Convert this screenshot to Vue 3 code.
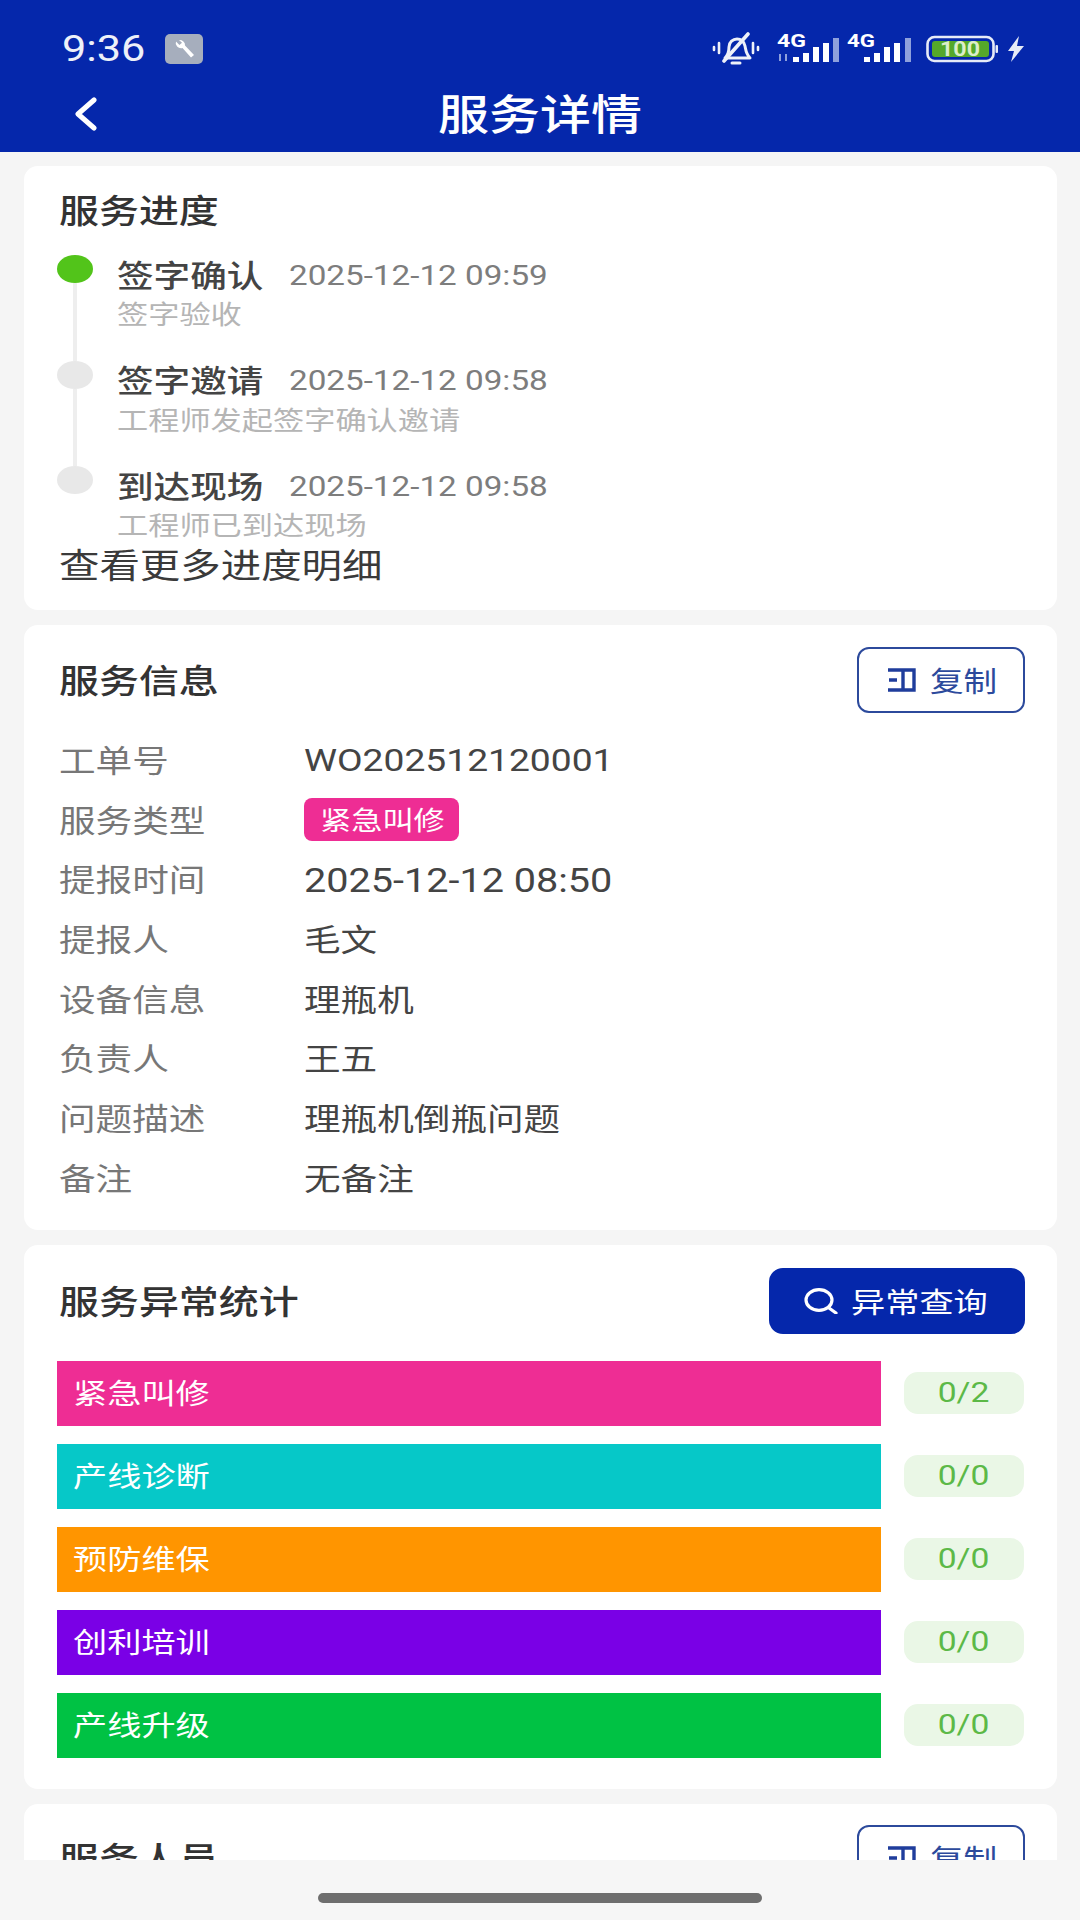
<script setup>
const steps = [
  { title: '签字确认', time: '2025-12-12 09:59', desc: '签字验收', active: true },
  { title: '签字邀请', time: '2025-12-12 09:58', desc: '工程师发起签字确认邀请' },
  { title: '到达现场', time: '2025-12-12 09:58', desc: '工程师已到达现场' }
]
const info = [
  { label: '工单号', text: 'WO202512120001', kind: 'code' },
  { label: '服务类型', text: '紧急叫修', kind: 'tag' },
  { label: '提报时间', text: '2025-12-12 08:50', kind: 'date' },
  { label: '提报人', text: '毛文', kind: 'text' },
  { label: '设备信息', text: '理瓶机', kind: 'text' },
  { label: '负责人', text: '王五', kind: 'text' },
  { label: '问题描述', text: '理瓶机倒瓶问题', kind: 'text' },
  { label: '备注', text: '无备注', kind: 'text' }
]
const stats = [
  { name: '紧急叫修', count: '0/2', color: '#ee2d94' },
  { name: '产线诊断', count: '0/0', color: '#06c8c8' },
  { name: '预防维保', count: '0/0', color: '#ff9500' },
  { name: '创利培训', count: '0/0', color: '#7a00e6' },
  { name: '产线升级', count: '0/0', color: '#00c244' }
]
</script>

<template>
  <div class="page">
    <header class="top">
      <div class="status">
        <div class="status-left">
          <span class="clock"><span class="wide">9:36</span></span>
          <svg class="wrench" width="38" height="30" viewBox="0 0 38 30">
            <rect width="38" height="30" rx="5" fill="#a6aebd" />
            <path d="M11 7.5a5.5 5 0 0 0 6.5 6.5L26 23.5l3-2.5-9-9.5A5.5 5 0 0 0 14 6l3 2.8-2.6 2.2z" fill="#fff" />
          </svg>
        </div>
        <div class="status-right">
          <svg class="bell" width="48" height="34" viewBox="0 0 48 34" fill="none" stroke="#eef1f9" stroke-width="3" stroke-linecap="round" stroke-linejoin="round">
            <path d="M2 15v3M7 11v10M46 15v3M41 11v10" stroke-width="2.6" />
            <path d="M13 26c3-3 4-6 4-11 0-5 4-8 8-8s7 3 8 7c1 5 1 8 5 12z" />
            <path d="M20 31h8" />
            <path d="M12 29 36 2" stroke-width="3.6" />
          </svg>
          <svg class="signal first" width="63" height="36" viewBox="0 -4 63 36">
            <text x="0" y="14" class="net" textLength="29" lengthAdjust="spacingAndGlyphs">4G</text>
            <path d="M3 21v7M9 21v7" stroke="#8ea0dc" stroke-width="2" />
            <rect x="16" y="24" width="6" height="5" fill="#fff" />
            <rect x="26" y="20" width="6" height="9" fill="#fff" />
            <rect x="36" y="14" width="6" height="15" fill="#fff" />
            <rect x="46" y="10" width="6" height="19" fill="#fff" />
            <rect x="56" y="5" width="6" height="24" fill="#8ea0dc" />
          </svg>
          <svg class="signal second" width="65" height="36" viewBox="0 -4 65 36">
            <text x="0" y="14" class="net" textLength="28" lengthAdjust="spacingAndGlyphs">4G</text>
            <rect x="17" y="24" width="6" height="5" fill="#fff" />
            <rect x="27" y="20" width="6" height="9" fill="#fff" />
            <rect x="37" y="14" width="6" height="15" fill="#fff" />
            <rect x="47" y="10" width="6" height="19" fill="#fff" />
            <rect x="58" y="5" width="6" height="24" fill="#8ea0dc" />
          </svg>
          <svg class="battery" width="72" height="28" viewBox="0 0 72 28">
            <rect x="1.5" y="2" width="66" height="24" rx="7" fill="none" stroke="#e6ebf7" stroke-width="2.6" />
            <rect x="6" y="6" width="57" height="16" rx="3" fill="#55a82a" />
            <rect x="69.5" y="10" width="2.5" height="8" rx="1" fill="#e6ebf7" />
            <text x="14" y="21" class="batt" textLength="40" lengthAdjust="spacingAndGlyphs">100</text>
          </svg>
          <svg class="bolt" width="18" height="26" viewBox="0 0 18 26">
            <path d="M12 0 1 15h6l-3 11 13-16h-7z" fill="#e6ebf7" />
          </svg>
        </div>
      </div>
      <div class="nav">
        <svg class="back" width="26" height="34" viewBox="0 0 26 34" fill="none" stroke="#fff" stroke-width="5" stroke-linecap="round" stroke-linejoin="round">
          <path d="M21 3 5 17l16 14" />
        </svg>
        <h1 class="nav-title">服务详情</h1>
      </div>
    </header>

    <main class="content">
      <section class="card card-progress">
        <h2 class="card-title progress-title"><span class="wide">服务进度</span></h2>
        <ul class="steps">
          <li v-for="(s, i) in steps" :key="s.title" class="step">
            <div class="rail">
              <span class="dot" :class="{ on: s.active }"></span>
              <span v-if="i < steps.length - 1" class="line"></span>
            </div>
            <div class="step-body">
              <div class="step-head">
                <span class="step-title"><span class="wide">{{ s.title }}</span></span>
                <span class="step-time"><span class="wide">{{ s.time }}</span></span>
              </div>
              <div class="step-desc"><span class="wide">{{ s.desc }}</span></div>
            </div>
          </li>
        </ul>
        <div class="more"><span class="wide">查看更多进度明细</span></div>
      </section>

      <section class="card card-info">
        <div class="card-head">
          <h2 class="card-title"><span class="wide">服务信息</span></h2>
          <button class="btn-outline">
            <svg width="28" height="24" viewBox="0 0 28 24" fill="none" stroke="#1f3d9c" stroke-width="3.4">
              <path d="M0 2h26v20H0M15 2v20M1 12h8" />
            </svg>
            <span class="wide">复制</span>
          </button>
        </div>
        <dl class="rows">
          <div v-for="r in info" :key="r.label" class="row">
            <dt class="label"><span class="wide">{{ r.label }}</span></dt>
            <dd class="value" :class="r.kind">
              <span v-if="r.kind === 'tag'" class="tag-box"><span class="wide">{{ r.text }}</span></span>
              <span v-else class="wide">{{ r.text }}</span>
            </dd>
          </div>
        </dl>
      </section>

      <section class="card card-stats">
        <div class="card-head">
          <h2 class="card-title"><span class="wide">服务异常统计</span></h2>
          <button class="btn-solid">
            <svg width="34" height="26" viewBox="0 0 34 26" fill="none" stroke="#fff" stroke-width="3.2" stroke-linecap="round">
              <ellipse cx="15" cy="12" rx="13" ry="10.4" />
              <path d="M25 20l7 5" />
            </svg>
            <span class="wide">异常查询</span>
          </button>
        </div>
        <div class="bars">
          <div v-for="b in stats" :key="b.name" class="bar-row">
            <div class="bar" :style="{ background: b.color }"><span class="wide">{{ b.name }}</span></div>
            <div class="count"><span class="wide mid">{{ b.count }}</span></div>
          </div>
        </div>
      </section>

      <section class="card card-staff">
        <div class="card-head">
          <h2 class="card-title"><span class="wide">服务人员</span></h2>
          <button class="btn-outline">
            <svg width="28" height="24" viewBox="0 0 28 24" fill="none" stroke="#1f3d9c" stroke-width="3.4">
              <path d="M0 2h26v20H0M15 2v20M1 12h8" />
            </svg>
            <span class="wide">复制</span>
          </button>
        </div>
      </section>
    </main>

    <footer class="gesture">
      <span class="home"></span>
    </footer>
  </div>
</template>

<style>
html, body { margin: 0; background: #f5f5f5; }
</style>

<style scoped>
.page {
  width: 1080px;
  height: 1920px;
  display: flex;
  flex-direction: column;
  overflow: hidden;
  background: #f5f5f5;
  font-family: "Noto Sans CJK SC", "Noto Sans", sans-serif;
  color: #333;
}
/* The screen is drawn about 1.2x wider than tall */
.wide {
  display: inline-block;
  white-space: nowrap;
  transform: scaleX(1.2);
  transform-origin: 0 50%;
}
.wide.mid { transform-origin: 50% 50%; }
.top {
  height: 152px;
  flex: none;
  background: #0527ab;
  color: #fff;
  display: flex;
  flex-direction: column;
}
.status {
  height: 84px;
  box-sizing: border-box;
  padding: 33px 55px 0 62px;
  display: flex;
  justify-content: space-between;
  align-items: flex-start;
}
.status-left { display: flex; align-items: center; gap: 20px; height: 32px; }
.clock {
  width: 83px;
  font-family: Roboto, sans-serif;
  font-size: 36px;
  line-height: 32px;
  color: #eef1f9;
}
.status-right { display: flex; align-items: center; height: 32px; }
.signal { align-self: flex-start; margin-top: -4px; }
.signal.first { margin-left: 17px; }
.signal.second { margin-left: 7px; }
.battery { margin-left: 14px; }
.bolt { margin-left: 9px; }
.net { font: 700 18px Roboto, sans-serif; fill: #fff; }
.batt { font: 700 20px Roboto, sans-serif; fill: #dceec8; }
.nav {
  position: relative;
  height: 68px;
  display: flex;
  align-items: center;
  justify-content: center;
}
.back { position: absolute; left: 73px; top: 13px; }
.nav-title {
  margin: 0;
  font-size: 42.5px;
  line-height: 50px;
  font-weight: 500;
  padding-bottom: 13px;
  transform: scaleX(1.2);
  white-space: nowrap;
}
.content {
  flex: 1;
  min-height: 0;
  overflow: hidden;
  padding: 14px 23px 0 24px;
  display: flex;
  flex-direction: column;
  gap: 15px;
}
.card {
  flex: none;
  background: #fff;
  border-radius: 14px;
  padding: 0 32px 0 33px;
}
.card-progress { padding-top: 25px; padding-bottom: 24px; height: 444px; box-sizing: border-box; }
.card-info { padding-top: 22px; padding-bottom: 22px; }
.card-stats { padding-top: 23px; padding-bottom: 31px; }
.card-staff { padding-top: 21px; padding-bottom: 24px; }
.card-title {
  margin: 0 0 0 2px;
  font-size: 33.3px;
  line-height: 36px;
  font-weight: 500;
  color: #333;
  padding-bottom: 2px;
}
.progress-title { margin-bottom: 26px; }
.steps { list-style: none; margin: 0; padding: 0; }
.step { display: flex; height: 105.5px; }
.rail {
  width: 36px;
  flex: none;
  display: flex;
  flex-direction: column;
  align-items: center;
}
.dot { width: 36px; height: 28px; flex: none; border-radius: 50%; background: #e8e8e8; }
.dot.on { background: #52c41a; }
.line { width: 4px; flex: 1; background: #eeeeee; }
.step-body { margin-left: 24px; }
.step-head { display: flex; align-items: center; height: 40px; }
.step-title {
  font-size: 30.5px;
  line-height: 40px;
  font-weight: 500;
  color: #444;
  width: 172px;
  flex: none;
  margin-bottom: 3px;
}
.step-time {
  font-family: Roboto, sans-serif;
  font-size: 27.7px;
  color: #7d7d7d;
}
.step-desc {
  font-size: 26px;
  line-height: 40px;
  color: #b5b5b5;
  margin-top: -2px;
}
.more {
  height: 40px;
  line-height: 40px;
  margin-top: -27.5px;
  margin-left: 2px;
  font-size: 33.7px;
  color: #3a3a3a;
}
.card-head {
  height: 66px;
  display: flex;
  align-items: center;
  justify-content: space-between;
}
.btn-outline {
  width: 168px;
  height: 66px;
  box-sizing: border-box;
  border: 2.5px solid #2c4a9c;
  border-radius: 12px;
  background: #fff;
  color: #2c4a9c;
  font: 400 28px "Noto Sans CJK SC", sans-serif;
  padding: 0 0 0 29px;
  display: flex;
  align-items: center;
  gap: 14px;
}
.btn-solid {
  width: 256px;
  height: 66px;
  border: 0;
  border-radius: 14px;
  background: #0527ab;
  color: #fff;
  font: 400 28.5px "Noto Sans CJK SC", sans-serif;
  padding: 0 0 0 35px;
  display: flex;
  align-items: center;
  gap: 13px;
}
.rows { margin: 17px 0 0; }
.row { display: flex; align-items: center; height: 59.7px; }
.label {
  width: 245px;
  flex: none;
  margin-left: 2px;
  padding-bottom: 2px;
  font-size: 30.5px;
  color: #777;
}
.value {
  margin: 0;
  padding-bottom: 2px;
  font-size: 30.5px;
  color: #444;
}
.value.code { font: 400 31px Roboto, sans-serif; padding: 2px 0 0; }
.value.date { font: 400 33px Roboto, sans-serif; padding: 3px 0 0; }
.value.tag { padding: 0; }
.tag-box {
  display: block;
  width: 155px;
  height: 43px;
  line-height: 41px;
  box-sizing: border-box;
  border-radius: 8px;
  background: #ee2d94;
  color: #fff;
  padding-left: 16px;
  font-size: 26px;
}
.bars { margin-top: 27px; display: flex; flex-direction: column; gap: 18px; }
.bar-row { display: flex; align-items: center; justify-content: space-between; }
.bar {
  width: 824px;
  height: 65px;
  line-height: 62px;
  padding-left: 16px;
  box-sizing: border-box;
  color: #fff;
  font-size: 28.5px;
}
.count {
  width: 120px;
  height: 42px;
  line-height: 42px;
  margin-right: 1px;
  border-radius: 14px;
  background: #eaf7e6;
  color: #5cb947;
  text-align: center;
  font-family: Roboto, sans-serif;
  font-size: 28px;
}
.gesture {
  height: 60px;
  flex: none;
  background: #f6f6f6;
  display: flex;
  justify-content: center;
}
.home {
  width: 444px;
  height: 10px;
  margin-top: 33px;
  border-radius: 5px;
  background: #6e6e6e;
}
</style>
